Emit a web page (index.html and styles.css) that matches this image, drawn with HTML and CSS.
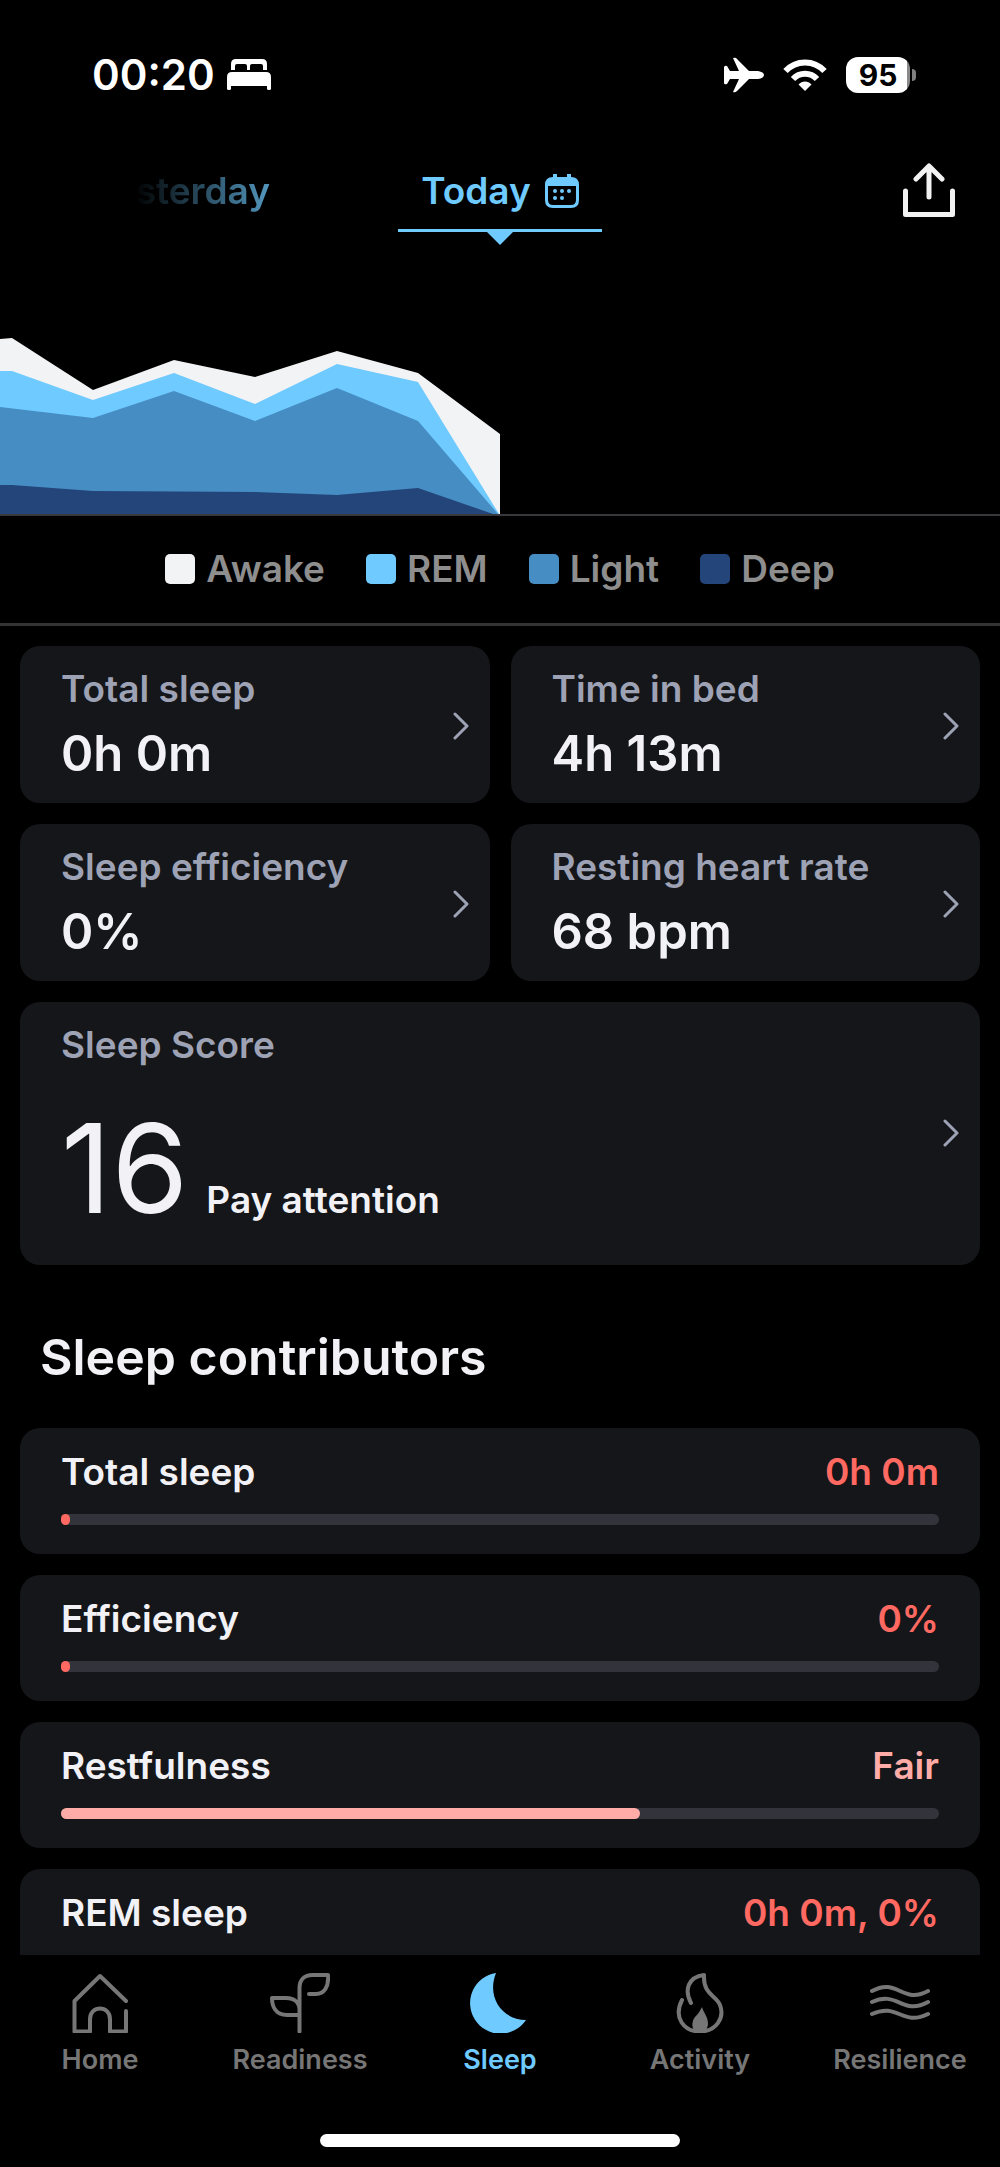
FILE: index.html
```html
<!DOCTYPE html>
<html lang="en">
<head>
    <meta charset="UTF-8">
    <meta name="viewport" content="width=device-width, initial-scale=1.0">
    <title>Sleep</title>
    <link rel="stylesheet" href="styles.css">
</head>
<body>
    <div class="status-bar">
        <div class="status-left">
            <span class="time">00:20</span>
            <svg width="44" height="32" viewBox="0 0 44 32" fill="#fff">
                <path d="M4 11V5q0-5 5-5h26q5 0 5 5v6h-4V7q0-2-2-2H25q-2 0-2 2v4h-3V7q0-2-2-2h-8q-2 0-2 2v4z"/>
                <path d="M0 30V18q0-5 5-5h34q5 0 5 5v12q0 1-2 1t-2-1v-3H4v3q0 1-2 1t-2-1z"/>
            </svg>
        </div>
        <div class="status-right">
            <svg width="40" height="36" viewBox="0 0 40 36" fill="#fff">
                <path d="M9 1q3-1 4 1l12 12h9q6 1 6 4t-6 4h-9L13 34q-2 2-4 1l6-13H6l-3 5q-3 1-3-1V10q1-2 3-1l3 5h9z"/>
            </svg>
            <svg width="44" height="32" viewBox="0 0 44 32" fill="none" stroke="#fff" stroke-width="6">
                <path d="M2.500 12C13 .5 31 .5 41.500 12"/>
                <path d="M10 20c6.500-7 17.500-7 24 0"/>
                <path d="M22 32l-6.500-6.500c3.500-4 9.500-4 13 0z" fill="#fff" stroke="none"/>
            </svg>
            <div class="battery"><span class="battery-level">95</span></div>
        </div>
    </div>

    <header class="header">
        <a class="day day-prev" href="#yesterday">Yesterday</a>
        <button class="day day-current" type="button">
            Today
            <svg width="34" height="34" viewBox="0 0 34 34">
                <path d="M8 3V0h4v3h10V0h4v3q8 0 8 8v15q0 8-8 8H8q-8 0-8-8V11q0-8 8-8zM3 12v14q0 5 5 5h18q5 0 5-5V12z" fill="currentColor" fill-rule="evenodd"/>
                <g fill="currentColor">
                    <circle cx="10" cy="17" r="2"/><circle cx="17" cy="17" r="2"/><circle cx="24" cy="17" r="2"/>
                    <circle cx="10" cy="24" r="2"/><circle cx="17" cy="24" r="2"/>
                </g>
            </svg>
        </button>
        <button class="share" type="button" aria-label="Share">
            <svg width="52" height="54" viewBox="0 0 52 54" fill="none" stroke="#f2f2f3" stroke-width="5" stroke-linecap="round" stroke-linejoin="round">
                <path d="M2.500 28v23.500h47V28M26 34V4M13 16L26 3l13 13"/>
            </svg>
        </button>
    </header>

    <svg class="chart" viewBox="0 0 1000 282" preserveAspectRatio="none" role="img" aria-label="Sleep stages by day">
        <path fill="#f2f3f4" d="M0 107L12 106 93 158 174 128 255 145 337 119 418 141 500 202V282H0z"/>
        <path fill="#6fcaff" d="M0 139H12L93 168 174 141 255 172 337 132 418 150 499 282H0z"/>
        <path fill="#458dc3" d="M0 175L93 186 174 159 255 189 337 156 418 189 498 282H0z"/>
        <path fill="#234579" d="M0 253H12L93 259 255 260 337 263 418 256 493 282H0z"/>
    </svg>

    <ul class="legend">
        <li><span class="swatch swatch-awake"></span>Awake</li>
        <li><span class="swatch swatch-rem"></span>REM</li>
        <li><span class="swatch swatch-light"></span>Light</li>
        <li><span class="swatch swatch-deep"></span>Deep</li>
    </ul>

    <main class="content">
        <section class="stats">
            <a class="card stat" href="#total-sleep">
                <span class="label">Total sleep</span>
                <span class="value">0h 0m</span>
                <svg class="chevron" viewBox="0 0 16 28"><path d="M2 2l12 12L2 26"/></svg>
            </a>
            <a class="card stat" href="#time-in-bed">
                <span class="label">Time in bed</span>
                <span class="value">4h 13m</span>
                <svg class="chevron" viewBox="0 0 16 28"><path d="M2 2l12 12L2 26"/></svg>
            </a>
            <a class="card stat" href="#efficiency">
                <span class="label">Sleep efficiency</span>
                <span class="value">0%</span>
                <svg class="chevron" viewBox="0 0 16 28"><path d="M2 2l12 12L2 26"/></svg>
            </a>
            <a class="card stat" href="#heart-rate">
                <span class="label">Resting heart rate</span>
                <span class="value">68 bpm</span>
                <svg class="chevron" viewBox="0 0 16 28"><path d="M2 2l12 12L2 26"/></svg>
            </a>
            <a class="card stat stat-score" href="#score">
                <span class="label">Sleep Score</span>
                <span class="score"><span class="score-number">16</span>Pay attention</span>
                <svg class="chevron" viewBox="0 0 16 28"><path d="M2 2l12 12L2 26"/></svg>
            </a>
        </section>

        <h2>Sleep contributors</h2>

        <section class="contributors">
            <div class="card contributor bad">
                <div class="row"><span>Total sleep</span><span class="result">0h 0m</span></div>
                <div class="bar"><div class="fill" style="width: 1%"></div></div>
            </div>
            <div class="card contributor bad">
                <div class="row"><span>Efficiency</span><span class="result">0%</span></div>
                <div class="bar"><div class="fill" style="width: 1%"></div></div>
            </div>
            <div class="card contributor fair">
                <div class="row"><span>Restfulness</span><span class="result">Fair</span></div>
                <div class="bar"><div class="fill" style="width: 66%"></div></div>
            </div>
            <div class="card contributor bad">
                <div class="row"><span>REM sleep</span><span class="result">0h 0m, 0%</span></div>
                <div class="bar"><div class="fill" style="width: 1%"></div></div>
            </div>
        </section>
    </main>

    <footer class="footer">
        <nav class="tabs">
            <a class="tab" href="#home">
                <svg viewBox="0 0 60 60"><path d="M56 28L30 3 4.500 28v30.500H20V46c0-14 20-14 20 0v12.500h16V38"/></svg>
                Home
            </a>
            <a class="tab" href="#readiness">
                <svg viewBox="0 0 60 60"><path d="M29.500 58.500V15c0-8 5-13 13-13H58c1 12-4 19-12 19h-7M29.500 42H17C6 42 2 34 2 25h14c9 0 13.500 5 13.500 12"/></svg>
                Readiness
            </a>
            <a class="tab active" href="#sleep">
                <svg viewBox="0 0 60 60"><path class="solid" d="M26 0A30.500 30.500 0 1 0 56 47C33 47 16 25 26 0z"/></svg>
                Sleep
            </a>
            <a class="tab" href="#activity">
                <svg viewBox="0 0 60 60"><path d="M12 27C3 45 14 58.500 30 58.500S55 45 50 32C46 22 33 22 34 2 18 4 14 17 21 30"/><path class="solid" d="M32 34c2 7 6 9 6 17 0 3-2 5-2 7H25c-4-4-3-10 0-14 3-3 5-6 7-10z"/></svg>
                Activity
            </a>
            <a class="tab" href="#resilience">
                <svg viewBox="0 0 60 60"><path d="M2 18c26-14 30 14 56 0M2 29c26-12 30 14 56 0M2 41c26-12 30 13 56 0"/></svg>
                Resilience
            </a>
        </nav>
        <div class="home-indicator"></div>
    </footer>
</body>
</html>
```
FILE: styles.css
```css
* {
    box-sizing: border-box;
}

body {
    margin: 0;
    height: 100vh;
    display: flex;
    flex-direction: column;
    overflow: hidden;
    background: #000;
    color: #f2f2f6;
    font-family: Inter, "Liberation Sans", sans-serif;
    font-size: 37px;
    font-weight: 600;
    line-height: 44px;
}

a {
    color: inherit;
    text-decoration: none;
}

button {
    padding: 0;
    border: 0;
    background: none;
    color: inherit;
    font: inherit;
    cursor: pointer;
}

svg {
    display: block;
    flex-shrink: 0;
}

/* Status bar */
.status-bar {
    display: flex;
    justify-content: space-between;
    align-items: center;
    height: 149px;
    padding: 0 84px 0 92px;
    color: #fff;
}

.status-left,
.status-right {
    display: flex;
    align-items: center;
}

.status-left {
    gap: 12px;
}

.status-right {
    gap: 19px;
}

.time {
    font-size: 42px;
}

.battery {
    display: flex;
    align-items: center;
    gap: 2px;
}

.battery::after {
    content: "";
    width: 4px;
    height: 12px;
    border-radius: 0 4px 4px 0;
    background: #7f7f7f;
}

.battery-level {
    width: 64px;
    height: 36px;
    border-radius: 12px;
    background: linear-gradient(to right, #fff 95%, #8a8a8a 95%);
    color: #000;
    font-size: 30px;
    font-weight: 700;
    line-height: 36px;
    text-align: center;
}

/* Day picker */
.header {
    display: grid;
    grid-template-columns: 1fr 204px 1fr;
    align-items: start;
    padding-top: 20px;
    color: #6fcaff;
}

.day-prev {
    justify-self: end;
    margin-right: 128px;
    -webkit-mask-image: linear-gradient(to right, transparent 24%, rgba(0, 0, 0, 0.75));
    mask-image: linear-gradient(to right, transparent 24%, rgba(0, 0, 0, 0.75));
}

.day-current {
    position: relative;
    display: flex;
    justify-content: center;
    align-items: center;
    gap: 14px;
    padding-bottom: 16px;
    border-bottom: 3px solid #6fcaff;
}

.day-current::after {
    content: "";
    position: absolute;
    top: 100%;
    left: 50%;
    border: 16px solid transparent;
    border-top-color: #6fcaff;
    border-bottom: 0;
    transform: translateX(-50%);
}

.share {
    justify-self: end;
    margin-right: 45px;
    margin-top: -6px;
}

/* Chart */
.chart {
    width: 100%;
    height: 282px;
}

.legend {
    display: flex;
    justify-content: center;
    gap: 41px;
    margin: 0;
    padding: 31px 0 32px;
    border-top: 2px solid #38383c;
    border-bottom: 3px solid #333336;
    color: #8e8e8e;
    list-style: none;
}

.legend li {
    display: flex;
    align-items: center;
    gap: 11px;
}

.swatch {
    width: 30px;
    height: 30px;
    border-radius: 5px;
}

.swatch-awake {
    background: #f2f3f4;
}

.swatch-rem {
    background: #6fcaff;
}

.swatch-light {
    background: #458dc3;
}

.swatch-deep {
    background: #234579;
}

/* Cards */
.content {
    flex: 1;
    min-height: 0;
    overflow: hidden;
    padding: 20px 20px 0;
}

.card {
    border-radius: 20px;
    background: #151619;
}

.stats {
    display: grid;
    grid-template-columns: 1fr 1fr;
    gap: 21px;
}

.stat {
    display: grid;
    grid-template-columns: 1fr auto;
    align-items: center;
    row-gap: 13px;
    padding: 21px 21px 19px 41px;
}

.label {
    color: #9ea2b5;
}

.value {
    grid-row: 2;
    font-size: 49px;
    line-height: 60px;
}

.chevron {
    grid-column: 2;
    grid-row: 1 / 3;
    width: 16px;
    height: 28px;
    fill: none;
    stroke: #9ea2b5;
    stroke-width: 3;
    stroke-linecap: round;
    stroke-linejoin: round;
}

.stat-score {
    grid-column: 1 / 3;
    row-gap: 26px;
    padding-bottom: 22px;
}

.score {
    display: flex;
    align-items: baseline;
    gap: 18px;
}

.score-number {
    font-size: 124px;
    font-weight: 400;
    line-height: 150px;
}

h2 {
    margin: 62px 20px 41px;
    font-size: 50px;
    font-weight: 600;
    line-height: 60px;
}

.contributors {
    display: flex;
    flex-direction: column;
    gap: 21px;
}

.contributor {
    padding: 22px 41px 29px;
}

.row {
    display: flex;
    justify-content: space-between;
    margin-bottom: 20px;
}

.bar {
    height: 11px;
    border-radius: 6px;
    background: #33343b;
}

.fill {
    height: 100%;
    border-radius: 6px;
    background: currentColor;
}

.bad .result,
.bad .fill {
    color: #ff6961;
}

.fair .result,
.fair .fill {
    color: #ffaca8;
}

/* Bottom tabs */
.footer {
    padding: 18px 0 20px;
}

.tabs {
    display: grid;
    grid-template-columns: repeat(5, 1fr);
    margin-bottom: 57px;
}

.tab {
    display: flex;
    flex-direction: column;
    align-items: center;
    gap: 10px;
    color: #767676;
    font-size: 27px;
    line-height: 34px;
}

.tab svg {
    width: 60px;
    height: 60px;
    fill: none;
    stroke: currentColor;
    stroke-width: 4;
    stroke-linecap: round;
    stroke-linejoin: round;
}

.tab .solid {
    fill: currentColor;
    stroke: none;
}

.active {
    color: #6fcaff;
}

.home-indicator {
    width: 36%;
    height: 13px;
    margin: 0 auto;
    border-radius: 7px;
    background: #fff;
}
```
